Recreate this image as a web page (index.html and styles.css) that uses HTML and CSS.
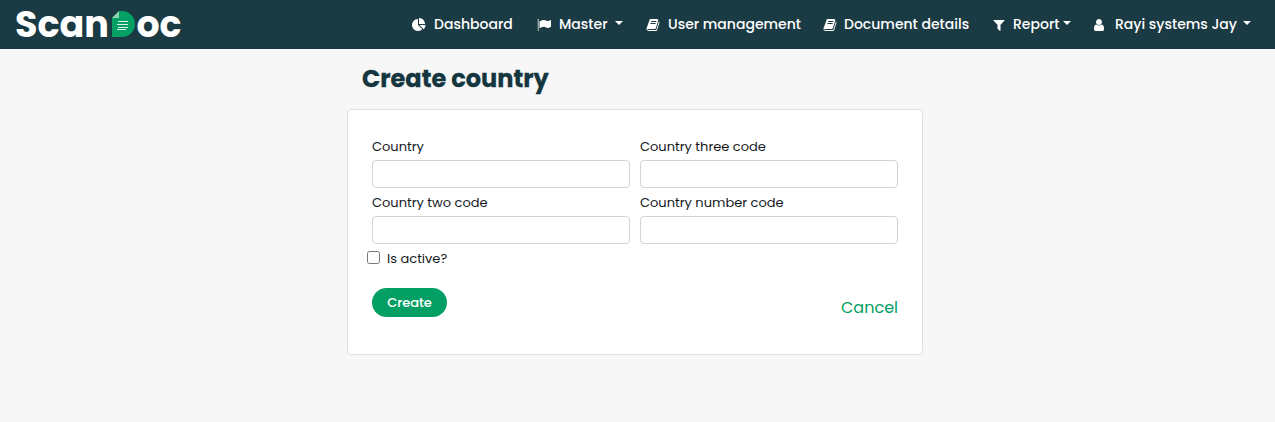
FILE: index.html
```html
<!DOCTYPE html>
<html lang="en">
<head>
<meta charset="utf-8">
<title>ScanDoc</title>
<link rel="stylesheet" href="styles.css">
</head>
<body>
<svg class="defs" width="0" height="0" aria-hidden="true">
  <symbol id="book" viewBox="0 0 1792 1792"><path d="M1703 478q40 57 18 129l-275 906q-19 64-76.5 107.5t-122.5 43.5h-923q-77 0-148.5-53.5t-99.5-131.5q-24-67-2-127 0-4 3-27t4-37q1-8-3-21.5t-3-19.5q2-11 8-21t16.500-23.500 16.500-23.500q23-38 45-91.500t30-91.500q3-10 .5-30t-.5-28q3-11 17-28t17-23q21-36 42-92t25-90q1-9-2.500-32t.5-28q4-13 22-30.500t22-22.500q19-26 42.500-84.500t27.500-96.500q1-8-3-25.500t-2-26.500q2-8 9-18t18-23 17-21q8-12 16.500-30.500t15-35 16-36 19.500-32 26.500-23.500 36-11.500 47.500 5.500l-1 3q38-9 51-9h761q74 0 114 56t18 130l-274 906q-36 119-71.500 153.500t-128.500 34.500h-869q-27 0-38 15-11 16-1 43 24 70 144 70h923q29 0 56-15.500t35-41.500l300-987q7-22 5-57 38 15 59 43zm-1064 2q-4 13 2 22.500t20 9.500h608q13 0 25.500-9.500t16.500-22.500l21-64q4-13-2-22.500t-20-9.500h-608q-13 0-25.500 9.500t-16.500 22.500zm-83 256q-4 13 2 22.500t20 9.500h608q13 0 25.500-9.500t16.500-22.500l21-64q4-13-2-22.500t-20-9.500h-608q-13 0-25.500 9.500t-16.500 22.500z"/></symbol>
</svg>
<header class="navbar">
  <a class="brand">
    <svg class="logo" width="170" height="40" viewBox="0 -3 170 40">
      <text class="brand-text" x="-1" y="28" textLength="94" lengthAdjust="spacingAndGlyphs">Scan</text>
      <path fill="#049f64" d="M103 2h3a13 13 0 0 1 0 26H96V9z"/>
      <path fill="#8fd0ad" d="M103 2v7h-7z"/>
      <path stroke="#d9f2e5" stroke-width="1" d="M102 12.500h10M101 15.500h11M102 18.500h10M101 20.500h9"/>
      <text class="brand-text" x="120.500" y="28" textLength="45" lengthAdjust="spacingAndGlyphs">oc</text>
    </svg>
  </a>
  <nav class="menu">
    <a class="item dashboard"><svg class="icon" viewBox="0 0 1792 1792"><path d="M768 890l546 546q-106 108-247.500 168t-298.500 60q-209 0-385.500-103t-279.500-279.500-103-385.500 103-385.500 279.500-279.500 385.500-103v762zm187 6h773q0 157-60 298.500t-168 247.500zm709-128h-768v-768q209 0 385.500 103t279.500 279.500 103 385.500z"/></svg><span class="label">Dashboard</span></a>
    <a class="item master"><svg class="icon" viewBox="0 0 1792 1792"><path opacity=".55" d="M64 128h192v1536H96z"/><path d="M1792 320v763q0 25-12.500 38.500t-39.500 27.500q-215 116-369 116-61 0-123.500-22t-108.500-48-115.500-48-142.500-22q-192 0-464 146-17 9-33 9-26 0-45-19t-19-45v-742q0-32 31-55 21-14 79-43 236-120 421-120 107 0 200 29t219 88q38 19 88 19 54 0 117.500-21t110-47 88-47 54.500-21q26 0 45 19t19 45z"/></svg><span class="label">Master</span><i class="caret"></i></a>
    <a class="item users"><svg class="icon"><use href="#book"/></svg><span class="label">User management</span></a>
    <a class="item documents"><svg class="icon"><use href="#book"/></svg><span class="label">Document details</span></a>
    <a class="item report"><svg class="icon" viewBox="0 0 1792 1792"><path d="M1595 295q17 41-14 70l-493 493v742q0 42-39 59-13 5-25 5-27 0-45-19l-256-256q-19-19-19-45v-486l-493-493q-31-29-14-70 17-39 59-39h1280q42 0 59 39z"/></svg><span class="label">Report</span><i class="caret"></i></a>
    <a class="item account"><svg class="icon" viewBox="0 0 1792 1792"><path d="M1536 1399q0 109-62.500 187t-150.500 78h-854q-88 0-150.500-78t-62.500-187q0-85 8.500-160.500t31.500-152 58.500-131 94-89 134.500-34.500q131 128 313 128t313-128q76 0 134.500 34.500t94 89 58.500 131 31.500 152 8.500 160.500zm-256-887q0 159-112.500 271.500t-271.500 112.500-271.500-112.500-112.500-271.500 112.500-271.500 271.500-112.500 271.500 112.500 112.500 271.500z"/></svg><span class="label">Rayi systems Jay</span><i class="caret"></i></a>
  </nav>
</header>
<main class="content">
  <h1 class="title">Create country</h1>
  <form class="card">
    <div class="fields">
      <label class="field"><span>Country</span><input class="input" type="text"></label>
      <label class="field"><span>Country three code</span><input class="input" type="text"></label>
      <label class="field"><span>Country two code</span><input class="input" type="text"></label>
      <label class="field"><span>Country number code</span><input class="input" type="text"></label>
    </div>
    <label class="check"><input class="checkbox" type="checkbox"><span>Is active?</span></label>
    <div class="actions">
      <button class="create" type="button">Create</button>
      <a class="cancel">Cancel</a>
    </div>
  </form>
</main>
</body>
</html>
```
FILE: styles.css
```css
* { box-sizing: border-box; }
body {
  margin: 0;
  height: 422px;
  overflow: hidden;
  background: #f7f7f7;
  color: #14181c;
  font-family: Poppins, Inter, sans-serif;
  font-size: 13px;
}
.defs { display: block; }
.navbar {
  display: flex;
  justify-content: space-between;
  height: 49px;
  padding-left: 16px;
  background: #1b3b44;
}
.brand { padding-top: 6px; }
.logo { display: block; overflow: visible; }
.brand-text { font-size: 37px; font-weight: 700; fill: #fff; }
.menu { display: flex; align-items: center; padding-right: 24px; }
.item {
  display: flex;
  align-items: center;
  height: 48px;
  color: #fff;
  font-size: 14px;
  font-weight: 500;
  line-height: 20px;
  white-space: nowrap;
}
.icon { flex: none; width: 14px; height: 14px; margin-right: 8px; fill: #fff; }
.label { flex: none; padding-bottom: 2px; }
.caret {
  width: 8px;
  margin-left: 8px;
  border: 4px solid transparent;
  border-top-color: #fff;
  border-bottom: 0;
  margin-top: -3px;
}
.dashboard { width: 125px; }
.master { width: 109px; }
.master .label { width: 48px; }
.users { width: 177px; }
.documents { width: 169px; }
.documents .icon { margin-right: 7px; }
.report { width: 100px; }
.report .label { width: 47px; }
.report .icon { margin-right: 7px; }
.report .caret { margin-left: 3px; }
.account .label { width: 120px; }
.account .icon { margin-right: 9px; }
.content { width: 576px; margin-left: 347px; }
.title {
  height: 60px;
  margin: 0;
  padding: 12px 0 0 15px;
  color: #15363e;
  font-size: 24px;
  font-weight: 700;
  line-height: 36px;
  -webkit-text-stroke: 0.3px #15363e;
}
.card {
  height: 246px;
  padding: 26px 24px;
  background: #fff;
  border: 1px solid #dee2e6;
  border-radius: 5px;
}
.fields { display: grid; grid-template-columns: 258px 258px; column-gap: 10px; }
.field { display: block; height: 56px; line-height: 20px; white-space: nowrap; }
.field span { display: block; height: 24px; padding-top: 1px; }
.input {
  display: block;
  width: 258px;
  height: 28px;
  border: 1px solid #ced4da;
  border-radius: 4px;
  background: #fff;
}
.check { display: flex; align-items: center; height: 20px; margin-left: -5px; }
.check span { padding-top: 2px; }
.checkbox { width: 13px; height: 13px; margin: 0 7px 2px 0; }
.actions { display: flex; justify-content: space-between; margin-top: 20px; }
.create {
  width: 75px;
  height: 29px;
  padding: 0;
  border: 0;
  border-radius: 15px;
  background: #049f64;
  color: #fff;
  font: 500 13px Poppins, Inter, sans-serif;
}
.cancel { padding-top: 8px; color: #049f64; font-size: 16px; line-height: 24px; }
```
